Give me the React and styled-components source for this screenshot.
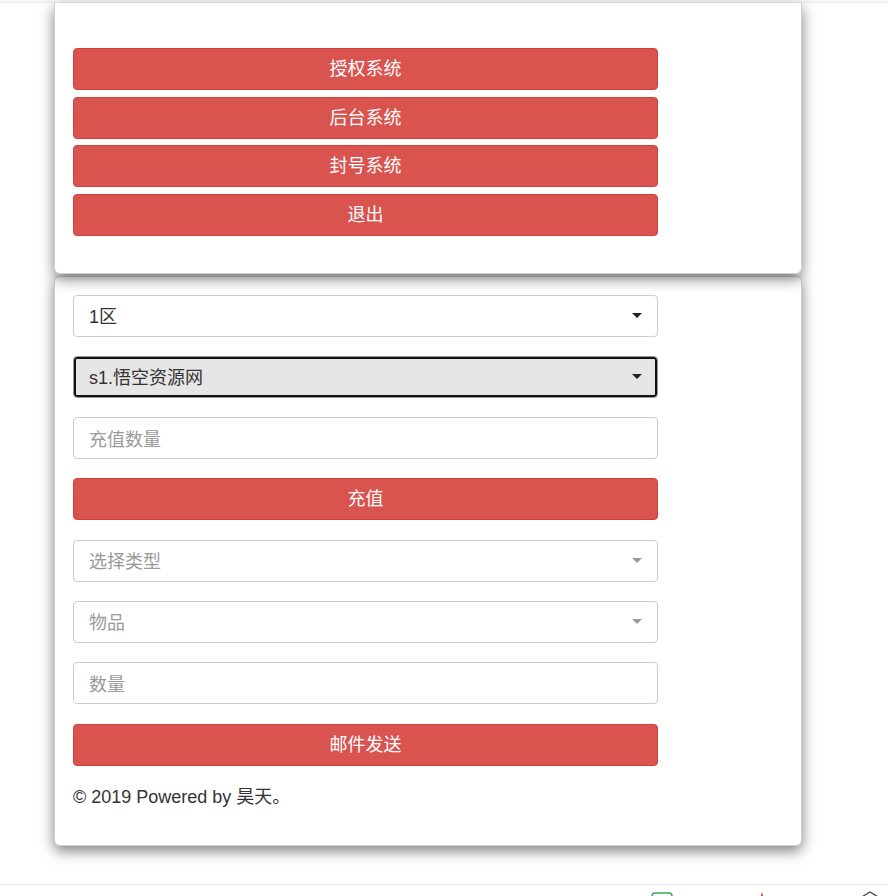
import React from 'react'
import styled, { createGlobalStyle } from 'styled-components'

const Global = createGlobalStyle`
html, body {
  margin: 0;
  padding: 0;
  background: #fff;
  font-family: "Liberation Sans", "Noto Sans CJK SC", sans-serif;
}
`

const Page = styled.div`
width: 888px;
height: 896px;
overflow: hidden;
position: relative;
display: flex;
flex-direction: column;
`

const TopLine = styled.div`
height: 2px;
border-bottom: 1px solid #ececec;
background: #f7f7f7;
flex-shrink: 0;
`

const Card = styled.div`
margin-left: 54px;
width: 748px;
box-sizing: border-box;
background: #fff;
border: 1px solid #d0d0d0;
border-radius: ${p => (p.$cut ? '0 0 6px 6px' : '6px')};
border-top: ${p => (p.$cut ? 'none' : '1px solid #d0d0d0')};
box-shadow: 0 5px 14px rgba(0, 0, 0, 0.5);
padding: ${p => p.$pad};
margin-top: ${p => p.$mt || '0'};
position: relative;
z-index: ${p => p.$z || 1};
flex-shrink: 0;
`

const Stack = styled.div`
width: 585px;
display: flex;
flex-direction: column;
gap: ${p => p.$gap};
`

const Label = styled.span`
line-height: 1;
padding: ${p => p.$pad || '0'};
`

const Btn = styled.button`
height: 42px;
width: 100%;
border: 1px solid #d43f3a;
border-radius: 4px;
background: #d9534f;
color: #fff;
font-family: "Noto Sans CJK SC", "Liberation Sans", sans-serif;
font-size: 18px;
padding: 0;
display: flex;
align-items: center;
justify-content: center;
`

const Field = styled.div`
height: 42px;
box-sizing: border-box;
border: 1px solid ${p => (p.$focus ? '#9a9a9a' : '#cccccc')};
border-radius: 4px;
background: ${p => (p.$focus ? '#e6e6e6' : '#fff')};
box-shadow: ${p => (p.$focus ? 'inset 0 0 0 2px #111' : 'none')};
display: flex;
align-items: center;
justify-content: space-between;
padding: 0 15px 0 15px;
font-size: 18px;
color: ${p => (p.$ph ? '#999' : '#333')};
`

const Arrow = styled.span`
width: 0;
height: 0;
border-left: 5px solid transparent;
border-right: 5px solid transparent;
border-top: 5px solid ${p => (p.$ph ? '#999' : '#222')};
`

const Footer = styled.div`
font-size: 18px;
color: #333;
margin-top: 16px;
`

const BottomBar = styled.div`
position: absolute;
left: 0;
right: 0;
top: 884px;
height: 12px;
border-top: 1px solid #e6e6e6;
background: #fff;
`

const BarIcon = styled.svg`
position: absolute;
top: ${p => p.$top}px;
left: ${p => p.$left}px;
`

const Select = ({ children, ph, focus }) => (
  <Field $ph={ph} $focus={focus}>
    <Label $pad="3px 0 0 0">{children}</Label>
    <Arrow $ph={ph} />
  </Field>
)

const Input = ({ children }) => (
  <Field $ph>
    <Label $pad="3px 0 0 0">{children}</Label>
  </Field>
)

const Button = ({ children }) => (
  <Btn>
    <Label $pad="0 0 4px 0">{children}</Label>
  </Btn>
)

export default function App() {
  return (
    <Page>
      <Global />
      <TopLine />
      <Card $cut $pad="45px 0 37px 18px" $z={2}>
        <Stack $gap="6.5px">
          <Button>授权系统</Button>
          <Button>后台系统</Button>
          <Button>封号系统</Button>
          <Button>退出</Button>
        </Stack>
      </Card>
      <Card $mt="2px" $pad="18px 0 37px 18px">
        <Stack $gap="19.3px">
          <Select>1区</Select>
          <Select focus>s1.悟空资源网</Select>
          <Input>充值数量</Input>
          <Button>充值</Button>
          <Select ph>选择类型</Select>
          <Select ph>物品</Select>
          <Input>数量</Input>
          <Button>邮件发送</Button>
        </Stack>
        <Footer>© 2019 Powered by 昊天。</Footer>
      </Card>
      <BottomBar>
        <BarIcon $left={651} $top={7} width="22" height="10" viewBox="0 0 22 10">
          <rect x="1" y="1" width="20" height="14" rx="3" fill="none" stroke="#3aa757" strokeWidth="1.5" />
        </BarIcon>
        <BarIcon $left={757} $top={6} width="10" height="10" viewBox="0 0 10 10">
          <path d="M5 1 L8 10 L2 10 Z" fill="#e4572e" />
        </BarIcon>
        <BarIcon $left={858} $top={5} width="24" height="10" viewBox="0 0 24 10">
          <path d="M2 8 L12 2 L22 8" fill="none" stroke="#444" strokeWidth="1.3" />
        </BarIcon>
      </BottomBar>
    </Page>
  )
}
